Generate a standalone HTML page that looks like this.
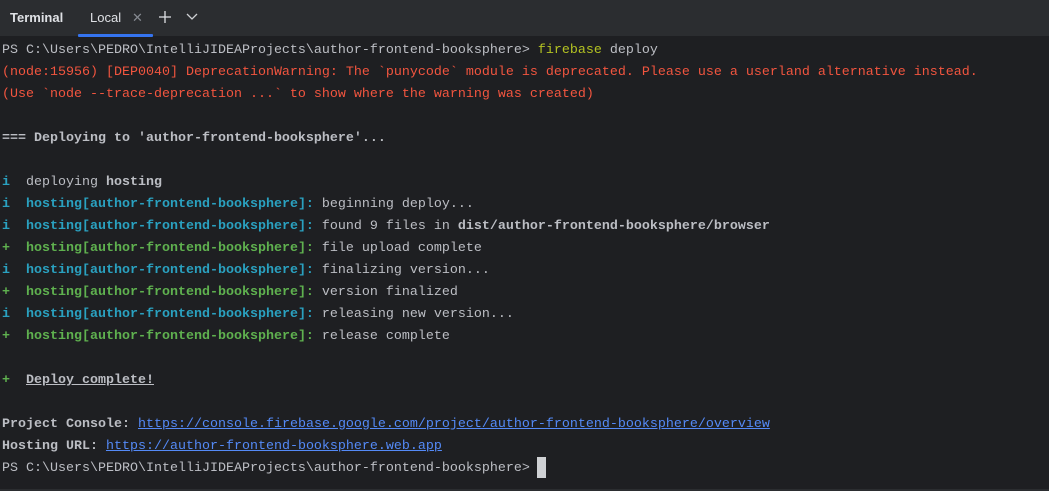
<!DOCTYPE html>
<html><head><meta charset="utf-8"><style>
html,body{margin:0;padding:0;width:1049px;height:491px;overflow:hidden;background:#1e1f22;}
.hdr{position:absolute;left:0;top:0;width:1049px;height:36px;background:#2b2d30;font-family:"Liberation Sans",sans-serif;font-size:13px;color:#dfe1e5;}
.hdr span{position:absolute;top:10px;}
.ul{position:absolute;left:78px;top:34px;width:75px;height:2.5px;background:#3574f0;border-radius:1px;}
.term{position:absolute;left:2px;top:40px;font-family:"Liberation Mono",monospace;font-size:13.33px;line-height:22px;color:#bcbec4;white-space:pre;}
.r{color:#f2553f}.c{color:#2aa1c0}.g{color:#5fb14f}.y{color:#b3c222}.b{font-weight:bold}
a{color:#548af7;text-decoration:underline;}
.u{text-decoration:underline}
.cur{position:absolute;left:537px;top:457px;width:9px;height:21px;background:#cfd1d4;}
.bot{position:absolute;left:0;top:489px;width:1049px;height:2px;background:#2b2d30;}
</style></head><body>
<div class="hdr">
<span style="left:10px;font-weight:bold">Terminal</span>
<span style="left:90px">Local</span>
<span style="left:132px;color:#868a91;font-size:13px">✕</span>
<svg style="position:absolute;left:158px;top:10px" width="14" height="14"><path d="M7 1V13M1 7H13" stroke="#dfe1e5" stroke-width="1.3"/></svg>
<svg style="position:absolute;left:186px;top:13px" width="12" height="8"><path d="M1 1L6 6L11 1" stroke="#cfd1d4" stroke-width="1.3" fill="none"/></svg>
<div class="ul"></div>
</div>
<div class="term">PS C:\Users\PEDRO\IntelliJIDEAProjects\author-frontend-booksphere&gt; <span class="y">firebase</span> deploy
<span class="r">(node:15956) [DEP0040] DeprecationWarning: The `punycode` module is deprecated. Please use a userland alternative instead.</span>
<span class="r">(Use `node --trace-deprecation ...` to show where the warning was created)</span>

<span class="b">=== Deploying to 'author-frontend-booksphere'...</span>

<span class="c b">i</span>  deploying <span class="b">hosting</span>
<span class="c b">i</span>  <span class="c b">hosting[author-frontend-booksphere]:</span> beginning deploy...
<span class="c b">i</span>  <span class="c b">hosting[author-frontend-booksphere]:</span> found 9 files in <span class="b">dist/author-frontend-booksphere/browser</span>
<span class="g b">+</span>  <span class="g b">hosting[author-frontend-booksphere]:</span> file upload complete
<span class="c b">i</span>  <span class="c b">hosting[author-frontend-booksphere]:</span> finalizing version...
<span class="g b">+</span>  <span class="g b">hosting[author-frontend-booksphere]:</span> version finalized
<span class="c b">i</span>  <span class="c b">hosting[author-frontend-booksphere]:</span> releasing new version...
<span class="g b">+</span>  <span class="g b">hosting[author-frontend-booksphere]:</span> release complete

<span class="g b">+</span>  <span class="b u">Deploy complete!</span>

<span class="b">Project Console:</span> <a>https://console.firebase.google.com/project/author-frontend-booksphere/overview</a>
<span class="b">Hosting URL:</span> <a>https://author-frontend-booksphere.web.app</a>
PS C:\Users\PEDRO\IntelliJIDEAProjects\author-frontend-booksphere&gt; </div>
<div class="cur"></div>
<div class="bot"></div>
</body></html>
